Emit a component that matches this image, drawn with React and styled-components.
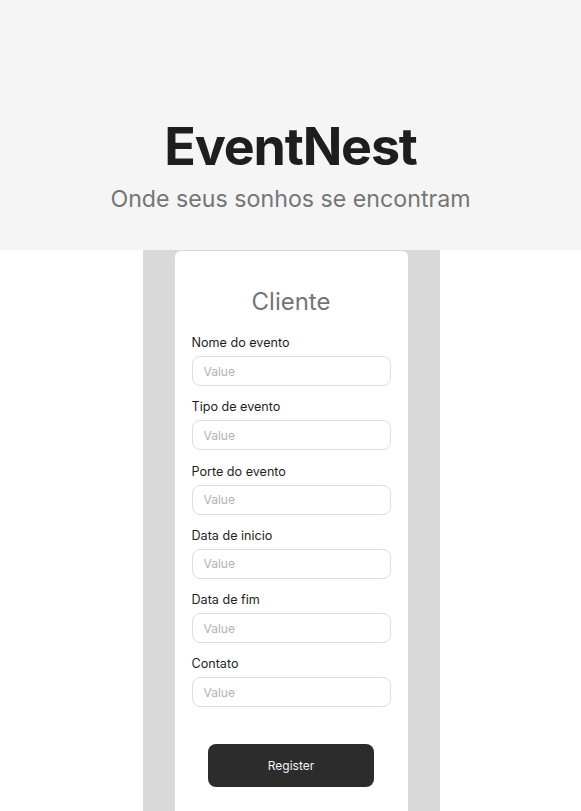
import React from 'react';
import styled, { createGlobalStyle } from 'styled-components';

const GlobalStyle = createGlobalStyle`
  * {
    box-sizing: border-box;
  }

  body {
    margin: 0;
    background: #ffffff;
    font-family: Inter, 'Noto Sans', sans-serif;
  }
`;

const Header = styled.header`
  height: 250px;
  background-color: #f5f5f5;
  display: flex;
  flex-direction: column;
  align-items: center;
  padding-top: 115px;
`;

const Title = styled.h1`
  margin: 0;
  font-size: 52px;
  font-weight: 700;
  letter-spacing: -1.2px;
  color: #1e1e1e;
`;

const Subtitle = styled.p`
  margin: 7px 0 0 0;
  font-size: 23.2px;
  font-weight: 400;
  color: #757575;
`;

const Main = styled.main`
  display: flex;
  justify-content: center;
  padding-left: 1px;
`;

const Column = styled.div`
  width: 297px;
  background-color: #d9d9d9;
  display: flex;
  justify-content: center;
  padding-top: 1px;
`;

const Card = styled.form`
  width: 233px;
  background-color: #ffffff;
  border-radius: 6px 6px 0 0;
  padding: 36px 17px 40px 17px;
  display: flex;
  flex-direction: column;
`;

const CardTitle = styled.h2`
  margin: 0 0 19px 0;
  text-align: center;
  font-size: 24px;
  font-weight: 400;
  color: #757575;
`;

const Fields = styled.div`
  display: flex;
  flex-direction: column;
  gap: 13.3px;
`;

const Field = styled.label`
  display: flex;
  flex-direction: column;
  gap: 5px;
`;

const Label = styled.span`
  font-size: 12.6px;
  line-height: 16px;
  color: #1e1e1e;
`;

const Input = styled.input`
  height: 30px;
  width: 100%;
  border: 1px solid #dedede;
  border-radius: 8px;
  padding: 0 11px;
  font-family: inherit;
  font-size: 12px;
  color: #1e1e1e;
  background: #ffffff;

  &::placeholder {
    color: #b3b3b3;
  }

  &:focus {
    outline: none;
    border-color: #2c2c2c;
  }
`;

const Button = styled.button`
  align-self: center;
  margin-top: 37px;
  width: 166px;
  height: 43px;
  border: none;
  border-radius: 8px;
  background-color: #2c2c2c;
  color: #f5f5f5;
  font-family: inherit;
  font-size: 12px;
  cursor: pointer;
`;

const fields = [
  'Nome do evento',
  'Tipo de evento',
  'Porte do evento',
  'Data de inicio',
  'Data de fim',
  'Contato',
];

const App = () => {
  return (
    <>
      <GlobalStyle />
      <Header>
        <Title>EventNest</Title>
        <Subtitle>Onde seus sonhos se encontram</Subtitle>
      </Header>
      <Main>
        <Column>
          <Card onSubmit={(e) => e.preventDefault()}>
            <CardTitle>Cliente</CardTitle>
            <Fields>
              {fields.map((name) => (
                <Field key={name}>
                  <Label>{name}</Label>
                  <Input placeholder="Value" />
                </Field>
              ))}
            </Fields>
            <Button type="submit">Register</Button>
          </Card>
        </Column>
      </Main>
    </>
  );
};

export default App;
